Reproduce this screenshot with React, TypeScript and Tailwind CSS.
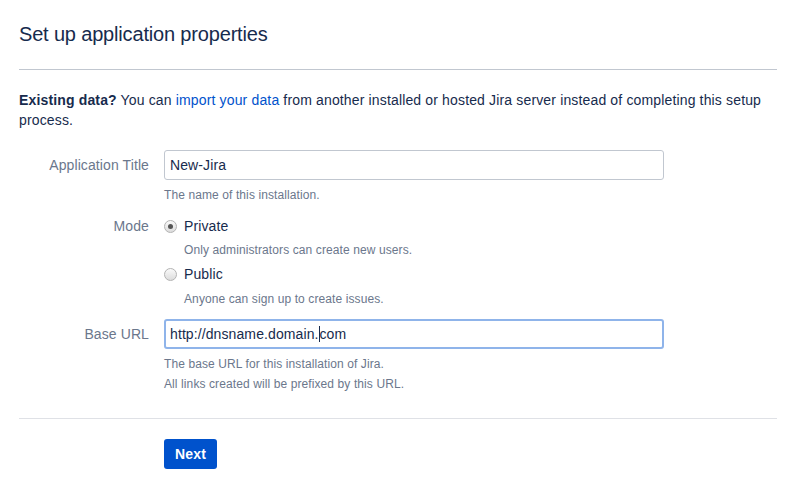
const font = { fontFamily: '"Liberation Sans", Arial, sans-serif' };

function Radio({ checked }: { checked?: boolean }) {
  return (
    <span className="flex h-[13px] w-[13px] items-center justify-center rounded-full border border-[#b3b3b3] bg-gradient-to-b from-[#fafafa] to-[#dcdcdc]">
      {checked && <span className="h-[5px] w-[5px] rounded-full bg-[#555]" />}
    </span>
  );
}

function Label({ children }: { children: React.ReactNode }) {
  return (
    <div className="w-[130px] shrink-0 text-right text-[14px] leading-[20px] tracking-[0.1px] text-[#6b778c]">
      {children}
    </div>
  );
}

function Help({ children }: { children: React.ReactNode }) {
  return (
    <div className="text-[12px] leading-[20px] tracking-[0.1px] text-[#6b778c]">{children}</div>
  );
}

export default function App() {
  return (
    <div className="h-[490px] w-[795px] bg-white px-[19px] text-[#172b4d]" style={font}>
      <h1 className="pt-[22px] text-[20px] leading-[24px] font-normal tracking-[-0.17px]">
        Set up application properties
      </h1>
      <div className="mt-[23px] w-[758px] border-t border-[#c1c7d0]" />

      <p className="mt-[20px] text-[14px] leading-[20px] tracking-[0.15px]">
        <b>Existing data?</b> You can <span className="text-[#0052cc]">import your data</span> from
        another installed or hosted Jira server instead of completing this setup process.
      </p>

      <div className="mt-[20px] flex gap-[15px]">
        <div className="flex h-[30px] items-center">
          <Label>Application Title</Label>
        </div>
        <div>
          <div className="flex h-[30px] w-[500px] items-center rounded-[3px] border border-[#c1c7d0] px-[5px] text-[14px] tracking-[0.1px]">
            New-Jira
          </div>
          <div className="mt-[5px]">
            <Help>The name of this installation.</Help>
          </div>
        </div>
      </div>

      <div className="mt-[11px] flex gap-[15px]">
        <Label>Mode</Label>
        <div>
          <div className="flex h-[20px] items-center gap-[7px] text-[14px] tracking-[0.1px]">
            <Radio checked />
            <span>Private</span>
          </div>
          <div className="mt-[4px] pl-[20px]">
            <Help>Only administrators can create new users.</Help>
          </div>
          <div className="mt-[4px] flex h-[20px] items-center gap-[7px] text-[14px] tracking-[0.1px]">
            <Radio />
            <span>Public</span>
          </div>
          <div className="mt-[5px] pl-[20px]">
            <Help>Anyone can sign up to create issues.</Help>
          </div>
        </div>
      </div>

      <div className="mt-[10px] flex gap-[15px]">
        <div className="flex h-[30px] items-center">
          <Label>Base URL</Label>
        </div>
        <div>
          <div className="flex h-[30px] w-[500px] items-center rounded-[3px] border-2 border-[#8fb4ea] px-[4px] text-[14px] tracking-[0.1px]">
            http://dnsname.domain.
            <span className="inline-block h-[16px] w-px bg-[#172b4d]" />
            com
          </div>
          <div className="mt-[5px]">
            <Help>The base URL for this installation of Jira.</Help>
            <Help>All links created will be prefixed by this URL.</Help>
          </div>
        </div>
      </div>

      <div className="mt-[24px] w-[758px] border-t border-[#dfe1e6]" />

      <div className="mt-[20px] pl-[145px]">
        <button className="h-[30px] rounded-[3px] bg-[#0052cc] px-[11px] text-[14px] font-bold tracking-[0.2px] text-white">
          Next
        </button>
      </div>
    </div>
  );
}
